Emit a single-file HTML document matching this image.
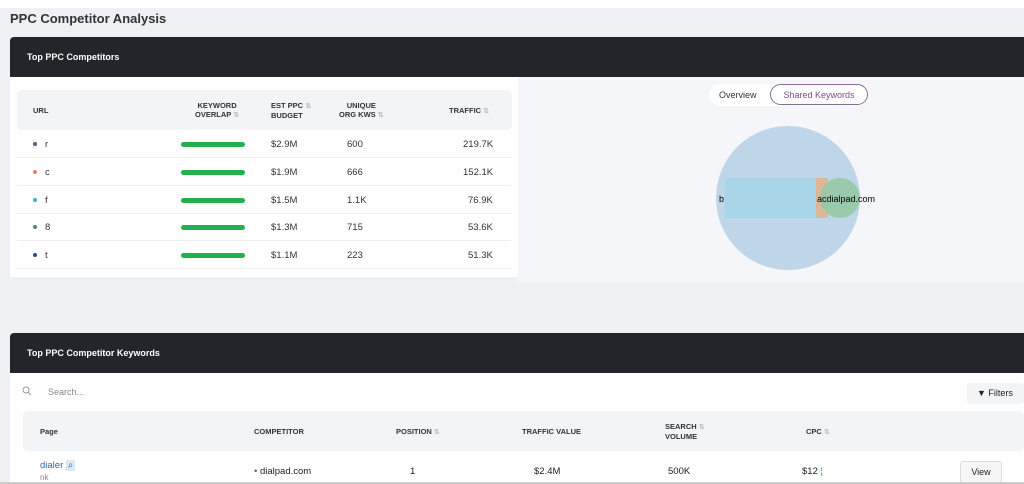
<!DOCTYPE html>
<html><head><style>
*{margin:0;padding:0;box-sizing:border-box}
body{width:1024px;height:484px;overflow:hidden;background:#eef0f4;font-family:"Liberation Sans",sans-serif;position:relative;color:#222}
.a{position:absolute}
.hdr{background:#24252b;color:#fff;font-weight:bold;font-size:9px;padding-left:17px;display:flex;align-items:center}
.th{font-size:7.5px;font-weight:bold;color:#333;line-height:9px}
.row{position:absolute;left:17px;width:494px;height:28px;border-bottom:1px solid #eee;font-size:9.5px;color:#333}
.row span{position:absolute;top:9px}
.bar{position:absolute;left:164px;top:12px;width:64px;height:5px;border-radius:3px;background:#22b14c}
.dot{position:absolute;left:16px;top:12px;width:4px;height:4px;border-radius:50%}
.s{color:#bbb;font-size:7px}
</style></head><body>
<div class="a" style="left:0;top:0;width:1024px;height:8px;background:#fff"></div>
<div class="a" style="left:10px;top:11px;font-size:13px;font-weight:bold;color:#333">PPC Competitor Analysis</div>
<div class="a hdr" style="left:10px;top:37px;width:1014px;height:40px;border-radius:4px 0 0 0">Top PPC Competitors</div>
<div class="a" style="left:10px;top:77px;width:508px;height:200px;background:#fff"></div>
<div class="a" style="left:518px;top:77px;width:506px;height:205px;background:#f5f6f9"></div>
<div class="a" style="left:17px;top:90px;width:495px;height:40px;background:#f3f4f6;border-radius:5px"></div>
<div class="a th" style="left:33px;top:106px">URL</div>
<div class="a th" style="left:195px;top:101px;text-align:center">KEYWORD<br>OVERLAP <span class="s">⇅</span></div>
<div class="a th" style="left:271px;top:101px">EST PPC <span class="s">⇅</span><br>BUDGET</div>
<div class="a th" style="left:339px;top:101px;text-align:center">UNIQUE<br>ORG KWS <span class="s">⇅</span></div>
<div class="a th" style="left:449px;top:106px">TRAFFIC <span class="s">⇅</span></div>
<div class="row" style="top:130px"><i class="dot" style="background:#6b4f8c"></i><span style="left:28px">r</span><div class="bar"></div><span style="left:254px">$2.9M</span><span style="left:330px">600</span><span style="left:446px">219.7K</span></div>
<div class="row" style="top:158px"><i class="dot" style="background:#e9806a"></i><span style="left:28px">c</span><div class="bar"></div><span style="left:254px">$1.9M</span><span style="left:330px">666</span><span style="left:446px">152.1K</span></div>
<div class="row" style="top:186px"><i class="dot" style="background:#3fb7d0"></i><span style="left:28px">f</span><div class="bar"></div><span style="left:254px">$1.5M</span><span style="left:330px">1.1K</span><span style="left:451px">76.9K</span></div>
<div class="row" style="top:213px"><i class="dot" style="background:#3a9a5a"></i><span style="left:28px">8</span><div class="bar"></div><span style="left:254px">$1.3M</span><span style="left:330px">715</span><span style="left:451px">53.6K</span></div>
<div class="row" style="top:241px"><i class="dot" style="background:#2b4f8e"></i><span style="left:28px">t</span><div class="bar"></div><span style="left:254px">$1.1M</span><span style="left:330px">223</span><span style="left:451px">51.3K</span></div>
<div class="a" style="left:709px;top:84px;width:160px;height:22px;background:#fff;border-radius:11px"></div>
<div class="a" style="left:719px;top:90px;font-size:9px;color:#333">Overview</div>
<div class="a" style="left:770px;top:84px;width:98px;height:21px;border:1px solid #8a6a96;border-radius:11px;font-size:9px;color:#7a4f8a;text-align:center;line-height:20px;background:#fff">Shared Keywords</div>
<svg class="a" style="left:700px;top:120px" width="200" height="160">
<circle cx="88" cy="78" r="72" fill="#bfd5e8"/>
<rect x="25" y="58" width="93" height="40" fill="#a9d5e8"/>
<rect x="116" y="58" width="12" height="40" fill="#dcb79a"/>
<circle cx="140" cy="78" r="20" fill="#93c9a4" opacity=".9"/>
<text x="19" y="82" font-size="9" font-family="Liberation Sans">b</text>
<text x="117" y="82" font-size="9" font-family="Liberation Sans">acdialpad.com</text>
</svg>
<div class="a hdr" style="left:10px;top:333px;width:1014px;height:40px;border-radius:4px 0 0 0">Top PPC Competitor Keywords</div>
<div class="a" style="left:10px;top:373px;width:1014px;height:111px;background:#fff"></div>
<svg class="a" style="left:22px;top:386px" width="10" height="10"><circle cx="4" cy="4" r="3" fill="none" stroke="#999" stroke-width="1"/><line x1="6.2" y1="6.2" x2="9" y2="9" stroke="#999"/></svg>
<div class="a" style="left:48px;top:387px;font-size:9px;color:#888">Search...</div>
<div class="a" style="left:967px;top:383px;width:57px;height:21px;background:#f3f4f6;border-radius:3px;font-size:9px;line-height:21px;padding-left:10px;color:#222">▼ Filters</div>
<div class="a" style="left:23px;top:411px;width:1001px;height:40px;background:#f3f4f6;border-radius:5px"></div>
<div class="a th" style="left:40px;top:427px">Page</div>
<div class="a th" style="left:254px;top:427px">COMPETITOR</div>
<div class="a th" style="left:396px;top:427px">POSITION <span class="s">⇅</span></div>
<div class="a th" style="left:522px;top:427px">TRAFFIC VALUE</div>
<div class="a th" style="left:665px;top:422px">SEARCH <span class="s">⇅</span><br>VOLUME</div>
<div class="a th" style="left:806px;top:427px">CPC <span class="s">⇅</span></div>
<div class="a" style="left:40px;top:460px;font-size:9.5px;color:#2b6aa8">dialer <span style="background:#dde8f5;padding:0 2px">⌕</span></div>
<div class="a" style="left:40px;top:473px;font-size:8px;color:#888">nk</div>
<div class="a" style="left:254px;top:466px;font-size:9.5px"><span style="color:#6b4f8c">•</span> dialpad.com</div>
<div class="a" style="left:410px;top:466px;font-size:9.5px">1</div>
<div class="a" style="left:534px;top:466px;font-size:9.5px">$2.4M</div>
<div class="a" style="left:668px;top:466px;font-size:9.5px">500K</div>
<div class="a" style="left:802px;top:466px;font-size:9.5px">$12 <span style="color:#2a2">¦</span></div>
<div class="a" style="left:960px;top:461px;width:42px;height:22px;border:1px solid #ddd;background:#f6f6f6;border-radius:3px;font-size:9px;text-align:center;line-height:20px">View</div>
<div class="a" style="left:0;top:482px;width:1024px;height:2px;background:#ccc"></div>
</body></html>
